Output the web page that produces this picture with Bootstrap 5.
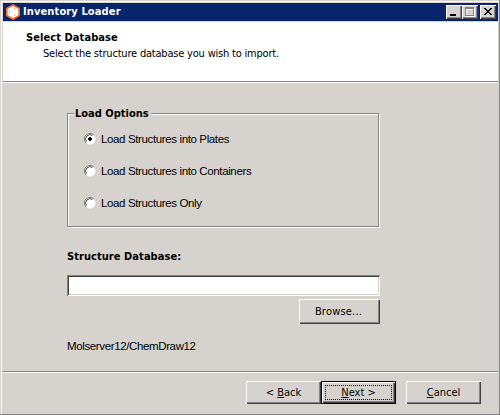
<!DOCTYPE html>
<html lang="en">
<head>
<meta charset="utf-8">
<meta name="viewport" content="width=device-width, initial-scale=1">
<title>Inventory Loader</title>
<link href="https://cdn.jsdelivr.net/npm/bootstrap@5.3.0/dist/css/bootstrap.min.css" rel="stylesheet">
<style>
:root{--face:#d6d3ce;--shade:#848284;--dark:#424142}
body{width:500px;height:415px;overflow:hidden;background:var(--face);color:#000;font:11px/14px "DejaVu Sans Condensed","DejaVu Sans",sans-serif}
.win{height:415px;padding:1px;border-right:1px solid var(--shade);border-bottom:1px solid var(--shade);box-shadow:inset 1px 1px var(--face),inset 2px 2px #fff}
.win-in{padding:2px 0 0 2px}
.bold{font-weight:700;white-space:nowrap}
.sans{font-family:"Liberation Sans",sans-serif;font-size:11.5px;white-space:nowrap;letter-spacing:-.37px}
.titlebar{height:18px;background:#08246b;color:#fff;padding:0 2px 0 3px}
.titlebar .bold{margin-left:3px;letter-spacing:.12px}
.capbtn{width:16px;height:14px;background:var(--face);box-shadow:inset 1px 1px #fff,inset -1px -1px var(--dark),inset -2px -2px var(--shade)}
.capbtn svg{display:block}
.capclose{margin-left:2px}
.head{height:60px;background:#fff;border-top:1px solid var(--face);padding:9px 0 0 23px}
.head .bold{letter-spacing:.08px}
.etch{height:2px;background:#fff;border-top:1px solid var(--shade)}
.sub{padding-left:17px;margin-top:2px;white-space:nowrap;letter-spacing:-.2px}
.main{height:288px;padding:23px 118px 0 64px}
.group{width:313px;height:122px;margin:0;padding:0;position:relative}
.group::before,.group::after{content:"";position:absolute;left:0;top:0;width:312px;height:114px;border:1px solid var(--shade);margin-top:7px}
.group::before{left:1px;top:1px;border-color:#fff}
.group .cap{position:absolute;z-index:1;left:7px;top:1px;width:77px;padding-left:1px;background:var(--face)}
.opts{padding:26px 0 0 17px}
.opts label{height:14px;margin-bottom:18px}
.opts svg{margin-right:5px}
.dblabel{margin-top:22px;letter-spacing:.06px}
.field{display:block;width:313px;height:21px;margin-top:11px;padding:0 4px;border:0;border-radius:0;outline:0;background:#fff;box-shadow:inset 1px 1px var(--shade),inset -1px -1px #fff,inset 2px 2px var(--dark),inset -2px -2px var(--face)}
.pbtn{width:75px;height:23px;padding:0;border:0;border-radius:0;background:var(--face);color:#000;font:inherit;line-height:14px;box-shadow:inset 1px 1px #fff,inset -1px -1px var(--dark),inset -2px -2px var(--shade)}
.browse{width:81px;height:25px;margin-top:3px;padding-right:2px;letter-spacing:.2px}
.default{margin-right:10px;position:relative;box-shadow:inset 0 0 0 1px #000,inset 2px 2px #fff,inset -2px -2px var(--dark),inset -3px -3px var(--shade)}
.default::after{content:"";position:absolute;inset:4px;border:1px dotted #000}
.server{margin-top:15px}
.foot{height:41px;padding:8px 17px 0 0}
</style>
<script src="https://cdn.jsdelivr.net/npm/bootstrap@5.3.0/dist/js/bootstrap.bundle.min.js"></script>
</head>
<body>
<svg width="0" height="0" class="d-none"><symbol id="radio" viewBox="0 0 12 12"><circle cx="6" cy="6" r="5.500" fill="#fff"/><path d="M2 10A5.500 5.500 0 0 1 10 2" fill="none" stroke="#848284"/><path d="M2.400 8.500A4.400 4.400 0 0 1 8.500 2.400" fill="none" stroke="#424142"/></symbol></svg>
<div class="win"><div class="win-in">
<header class="titlebar d-flex align-items-center">
<svg width="14" height="16" viewBox="0 0 14 16"><path d="M7 0 14 4v8l-7 4-7-4V4z" fill="#ff6d21"/><path d="M7 2 12.300 5v6L7 14 1.700 11V5z" fill="#fff"/><path d="M3.500 6v4M7.500 4l2.500 1.500M7.500 12l2.500-1.500" stroke="#ff6d21" stroke-width=".5"/></svg>
<span class="bold">Inventory Loader</span>
<div class="d-flex ms-auto">
<span class="capbtn"><svg width="16" height="14"><path d="M4 9h6v2H4z"/></svg></span>
<span class="capbtn"><svg width="16" height="14" shape-rendering="crispEdges"><path d="M4 3h9v9H4zM5 5v6h7V5z" fill="#fff" fill-rule="evenodd"/><path d="M3 2h9v9H3zM4 4v6h7V4z" fill="#848284" fill-rule="evenodd"/></svg></span>
<span class="capbtn capclose"><svg width="16" height="14" shape-rendering="crispEdges"><path d="M4 3h2v1h1v1h2V4h1V3h2v1h-1v1h-1v1H9v1h1v1h1v1h1v1h-2V9H9V8H7v1H6v1H4V9h1V8h1V7h1V6H6V5H5V4H4z"/></svg></span>
</div>
</header>
<section class="head"><div class="bold">Select Database</div><div class="sub">Select the structure database you wish to import.</div></section>
<div class="etch"></div>
<main class="main">
<fieldset class="group"><div class="cap bold">Load Options</div>
<div class="opts d-flex flex-column">
<label class="d-flex align-items-center sans"><svg width="12" height="12"><use href="#radio"/><path d="M5 4h2v1h1v2H7v1H5V7H4V5h1z"/></svg>Load Structures into Plates</label>
<label class="d-flex align-items-center sans"><svg width="12" height="12"><use href="#radio"/></svg>Load Structures into Containers</label>
<label class="d-flex align-items-center sans"><svg width="12" height="12"><use href="#radio"/></svg>Load Structures Only</label>
</div></fieldset>
<div class="dblabel bold">Structure Database:</div>
<input class="field form-control" type="text" aria-label="Structure Database">
<div class="d-flex justify-content-end"><button class="btn pbtn browse">Browse...</button></div>
<div class="server sans">Molserver12/ChemDraw12</div>
</main>
<div class="etch"></div>
<footer class="foot d-flex justify-content-end">
<button class="btn pbtn">&lt; <u>B</u>ack</button><button class="btn pbtn default"><u>N</u>ext &gt;</button><button class="btn pbtn"><u>C</u>ancel</button>
</footer>
</div></div>
</body>
</html>
